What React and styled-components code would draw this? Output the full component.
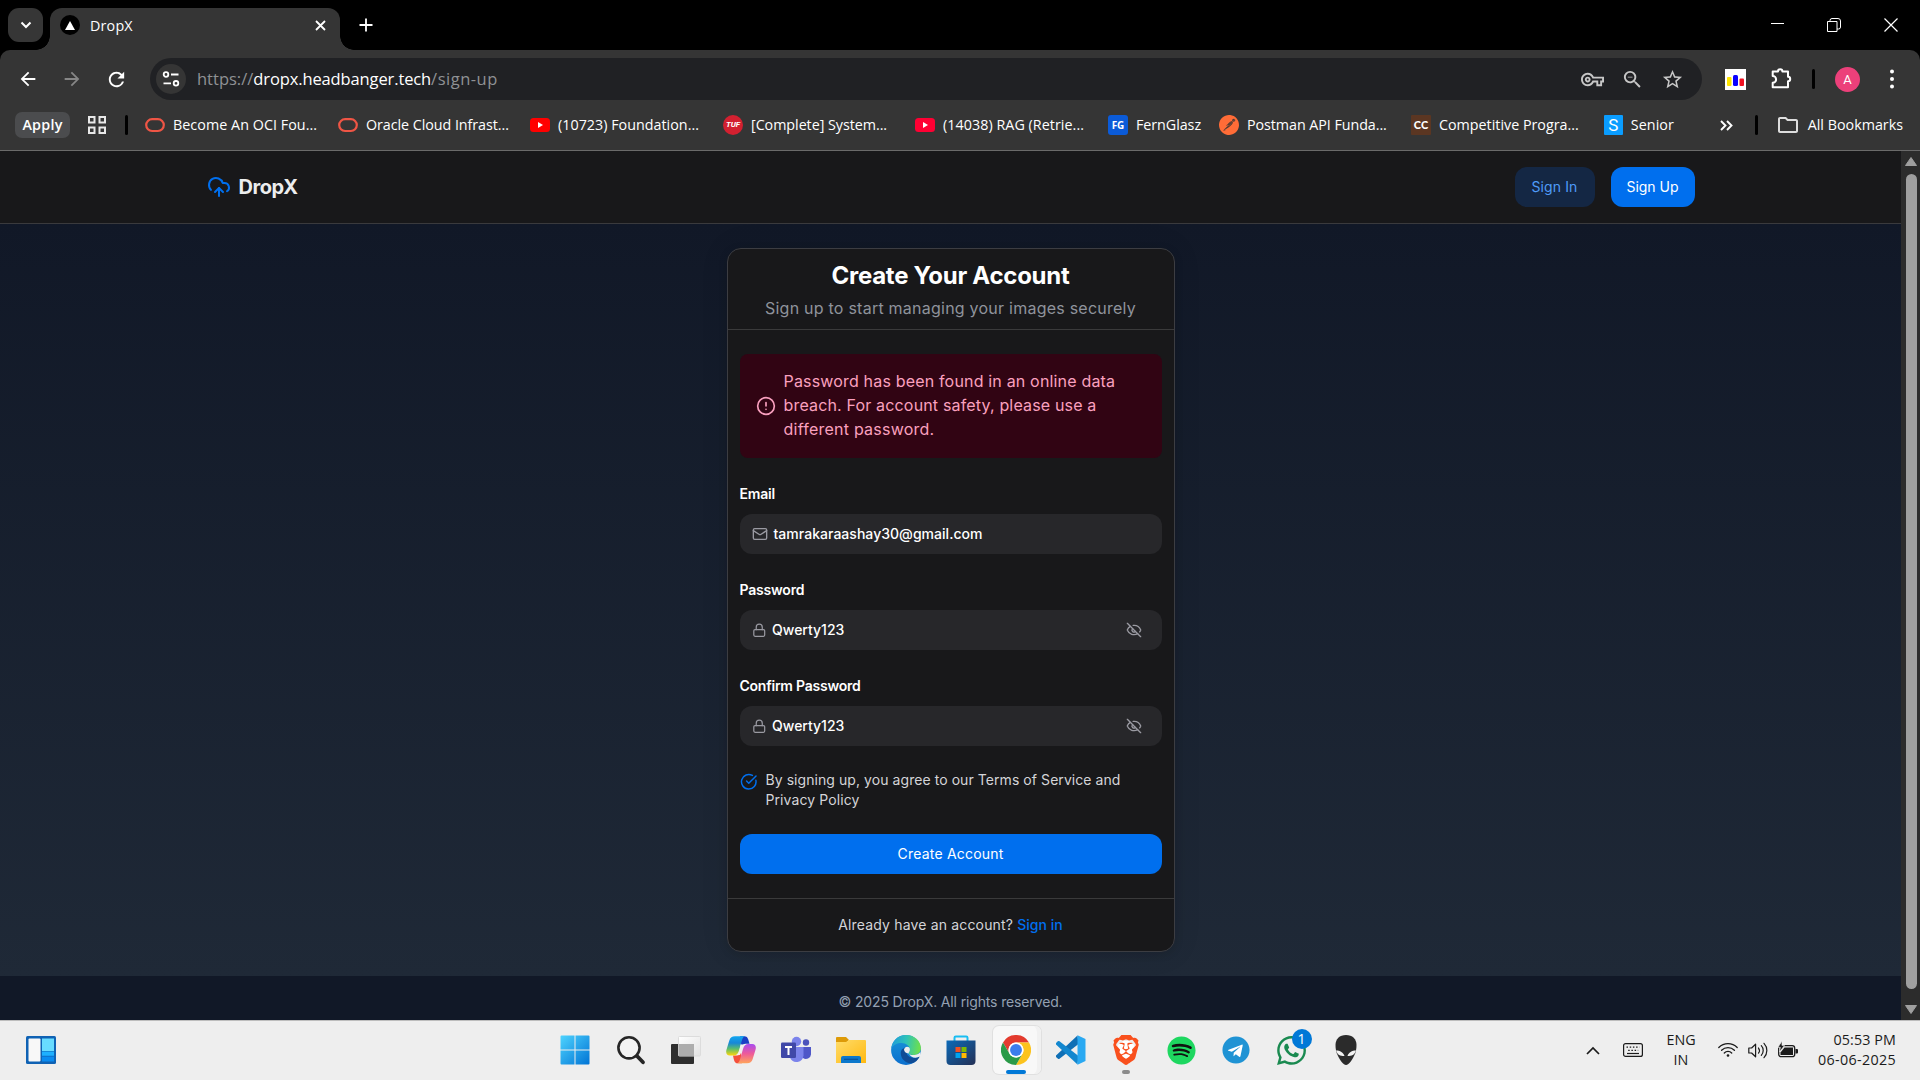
import React from "react";
import styled, { createGlobalStyle, css } from "styled-components";
import { CloudUpload, Mail, Lock, EyeOff, CircleCheckBig, CircleAlert } from "lucide-react";
import { MdArrowBack, MdArrowForward, MdRefresh, MdOutlineVpnKey, MdZoomOut, MdStarBorder, MdOutlineFolder } from "react-icons/md";
import { FaSpotify, FaTelegram, FaWhatsapp } from "react-icons/fa";
import { SiBrave, SiPostman } from "react-icons/si";

const Global = createGlobalStyle`
  *, *::before, *::after { box-sizing: border-box; }
  body { margin: 0; background: #000; overflow: hidden; }
  svg { display: block; flex: none; }
`;

const Screen = styled.div`
  width: 1920px;
  height: 1080px;
  display: flex;
  flex-direction: column;
  font-family: "Open Sans", "Noto Sans", sans-serif;
  overflow: hidden;
`;

const Txt = styled.span`
  white-space: nowrap;
  letter-spacing: ${(p) => p.$ls || 0}px;
`;

/* ---------- browser window ---------- */

const TabStrip = styled.div`
  height: 50px;
  background: #000;
  display: flex;
  padding: 8px 1px 0 8px;
  color: #fff;
`;
const TabSearch = styled.div`
  width: 35px;
  height: 34px;
  border-radius: 11px;
  background: #363636;
  display: grid;
  place-items: center;
`;
const Tab = styled.div`
  position: relative;
  width: 290px;
  margin-left: 7px;
  height: 42px;
  background: #353535;
  border-radius: 12px 12px 0 0;
  display: flex;
  align-items: center;
  padding: 0 13.5px 8px 10px;
  font-size: 14.3px;
  &::before, &::after {
    content: "";
    position: absolute;
    bottom: 0;
    width: 14px;
    height: 14px;
  }
  &::before { left: -14px; background: radial-gradient(circle at 0 0, transparent 13.5px, #353535 14px); }
  &::after { right: -14px; background: radial-gradient(circle at 100% 0, transparent 13.5px, #353535 14px); }
`;
const Favicon = styled.div`
  width: 20px;
  height: 20px;
  border-radius: 50%;
  background: #000;
  display: grid;
  place-items: center;
  margin-right: 10px;
`;
const Push = styled.div`
  flex: 1;
`;
const NewTab = styled.div`
  margin-left: 18.5px;
  width: 14px;
  height: 34px;
  display: grid;
  place-items: center;
`;
const WindowButton = styled.div`
  width: 57px;
  height: 33px;
  display: grid;
  place-items: center;
`;

const ChromeBars = styled.div`
  height: 101px;
  background: #353535;
  border-radius: 10px 10px 0 0;
  border-bottom: 1px solid #6a6a6a;
`;
const Toolbar = styled.div`
  height: 58px;
  padding-left: 5.5px;
  display: flex;
  align-items: center;
  color: #fff;
`;
const NavIcon = styled.div`
  width: 44.5px;
  display: grid;
  place-items: center;
  color: ${(p) => (p.$dim ? "#868686" : "#fff")};
`;
const Omnibox = styled.div`
  margin-left: 11px;
  width: 1552px;
  height: 42px;
  border-radius: 21px;
  background: #202124;
  display: flex;
  align-items: center;
  padding: 0 16.5px 0 6px;
  color: #c7c7c7;
`;
const SiteChip = styled.div`
  width: 30px;
  height: 30px;
  border-radius: 50%;
  background: #353535;
  display: grid;
  place-items: center;
  margin-right: 11px;
`;
const Url = styled.div`
  display: flex;
  font-size: 16.5px;
  line-height: 24px;
  color: #8f9194;
`;
const Host = styled(Txt)`
  color: #fff;
`;
const OmniIcon = styled.div`
  width: 40px;
  display: grid;
  place-items: center;
  &:last-child { width: 26px; margin-left: 7px; }
`;
const Bar = styled.div`
  width: 3px;
  height: 20px;
  border-radius: 1.5px;
  background: #000;
  margin-left: ${(p) => p.$ml}px;
`;
const ChartExt = styled.div`
  width: 21px;
  height: 21px;
  margin: 0 24px 0 23px;
`;
const Avatar = styled.div`
  width: 25px;
  height: 25px;
  border-radius: 50%;
  background: #ec407a;
  margin: 0 29px 0 20px;
  font: 13px/25px Roboto, sans-serif;
  text-align: center;
  color: #fff;
`;

const Bookmarks = styled.div`
  height: 34px;
  display: flex;
  align-items: center;
  padding: 0 17px 0 15px;
  font-size: 14.3px;
  line-height: 20px;
  color: #fff;
`;
const ApplyPill = styled.div`
  width: 55px;
  height: 26px;
  border-radius: 7px;
  background: #4b4c4e;
  font-weight: 600;
  text-align: center;
  line-height: 25px;
  margin-right: 18px;
`;
const BookmarkList = styled.div`
  display: flex;
  margin-left: 17px;
`;
const Bookmark = styled.div`
  width: ${(p) => p.$w}px;
  display: flex;
  align-items: center;
  gap: 8px;
`;
const AllBookmarks = styled.div`
  display: flex;
  align-items: center;
  gap: 8px;
  margin-left: 17.5px;
  svg { color: #ddd; }
`;
const Badge = styled.div`
  width: 20px;
  height: 20px;
  border-radius: ${(p) => p.$r}px;
  background: ${(p) => p.$bg};
  color: #fff;
  font: ${(p) => p.$font};
  line-height: 20px;
  text-align: center;
`;

/* ---------- web page ---------- */

const Viewport = styled.div`
  height: 869px;
  display: flex;
`;
const Page = styled.div`
  width: 1901px;
  display: flex;
  flex-direction: column;
  font-family: Inter, "Open Sans", sans-serif;
  font-size: 14px;
  line-height: 20px;
  color: #ecedee;
`;
const NavBar = styled.header`
  height: 73px;
  background: #18181a;
  border-bottom: 1px solid #3a3a3d;
`;
const NavInner = styled.div`
  width: 1536px;
  height: 72px;
  margin: 0 auto;
  padding: 0 24px;
  display: flex;
  align-items: center;
`;
const Brand = styled.div`
  display: flex;
  align-items: center;
  gap: 8px;
  flex: 1;
  font-size: 20px;
  font-weight: 700;
  svg { color: #006fee; }
`;
const Button = styled.div`
  height: 40px;
  width: ${(p) => p.$w || "100%"};
  border-radius: 12px;
  display: flex;
  align-items: center;
  justify-content: center;
  ${(p) =>
    p.$flat
      ? css`background: #142744; color: #4f9bf8; margin-right: 16px;`
      : css`background: #006fee; color: #fff;`}
`;
const Main = styled.main`
  flex: 1;
  display: flex;
  justify-content: center;
  align-items: flex-start;
  padding-top: 24px;
  background: linear-gradient(#111827, #1f2937);
`;
const Card = styled.section`
  width: 448px;
  height: 704px;
  border: 1px solid #3c3d42;
  border-radius: 14px;
  background: #18181a;
  box-shadow: 0 2px 10px rgba(0, 0, 0, 0.12), 0 0 30px rgba(0, 0, 0, 0.08);
`;
const CardHead = styled.div`
  height: 81px;
  padding-top: 11px;
  border-bottom: 1px solid #3a3a3b;
  display: flex;
  flex-direction: column;
  align-items: center;
  gap: 4px;
`;
const Title = styled.h1`
  margin: 0;
  font-size: 24px;
  line-height: 32px;
  font-weight: 700;
  color: #fff;
`;
const Subtitle = styled.p`
  margin: 0;
  font-size: 16px;
  line-height: 24px;
  color: #8f939c;
`;
const CardBody = styled.div`
  height: 569px;
  padding: 24px 12px;
  display: flex;
  flex-direction: column;
  gap: 24px;
  border-bottom: 1px solid #3a3a3b;
`;
const Lines = styled.div`
  display: flex;
  flex-direction: column;
`;
const AlertBox = styled.div`
  height: 104px;
  border-radius: 8px;
  background: #310413;
  color: #faa0bf;
  display: flex;
  align-items: center;
  gap: 8px;
  padding: 0 16px;
  font-size: 16px;
  line-height: 24px;
  ${Lines} { padding-bottom: 2px; }
`;
const Field = styled.div`
  display: flex;
  flex-direction: column;
  gap: 8px;
  height: 72px;
`;
const Label = styled.label`
  line-height: 24px;
  font-weight: 600;
  color: #fff;
`;
const Input = styled.div`
  height: 40px;
  border-radius: 12px;
  background: #27272a;
  display: flex;
  align-items: center;
  padding: 0 20px 0 12px;
  gap: 6px;
  color: #fff;
  font-weight: 500;
  svg { color: #9a9aa2; }
`;
const Terms = styled.div`
  height: 40px;
  display: flex;
  gap: 8px;
  padding-left: 0.5px;
  color: #d4d4d8;
  svg { color: #006fee; margin-top: 3px; }
`;
const CardFoot = styled.div`
  height: 52px;
  display: flex;
  align-items: center;
  justify-content: center;
  gap: 4px;
  color: #d4d4d8;
`;
const SignIn = styled(Txt)`
  color: #006fee;
  font-weight: 500;
`;
const PageFoot = styled.footer`
  height: 44px;
  background: #111827;
  color: #94a0b2;
  display: flex;
  align-items: center;
  justify-content: center;
  padding-top: 8px;
`;
const ScrollTrack = styled.div`
  width: 19px;
  background: #2c2c2c;
  display: flex;
  flex-direction: column;
  align-items: center;
  padding: 6px 0 6px 1px;
`;
const ScrollThumb = styled.div`
  width: 11px;
  height: 815px;
  margin: 8px 0 16px;
  border-radius: 6px;
  background: #9f9f9f;
`;

/* ---------- taskbar ---------- */

const TaskBar = styled.div`
  height: 60px;
  border-top: 1px solid #bdbdbd;
  padding-bottom: 1px;
  background: #eee;
  display: flex;
  align-items: center;
  color: #1b1b1b;
`;
const Widgets = styled.div`
  width: 548.5px;
  padding-left: 26px;
`;
const Apps = styled.div`
  display: flex;
  flex: 1;
`;
const AppSlot = styled.div`
  position: relative;
  width: 55px;
  height: 48px;
  padding-right: ${(p) => p.$pr || 0}px;
  display: grid;
  place-items: center;
`;
const ActivePlate = styled.div`
  position: absolute;
  inset: 0 3px 0 4px;
  border-radius: 6px;
  background: #f8f8f8;
  box-shadow: 0 0 0 1px #e0e0e0, inset -5px 0 0 -1px #f1f1f1;
`;
const Over = styled.div`
  position: relative;
`;
const Underline = styled.div`
  position: absolute;
  bottom: 0;
  left: 50%;
  width: ${(p) => p.$w}px;
  height: 4px;
  border-radius: 2px;
  transform: translateX(-50%);
  background: ${(p) => p.$c};
`;
const Count = styled.div`
  position: absolute;
  top: 3px;
  left: 28px;
  width: 20px;
  height: 20px;
  border-radius: 50%;
  background: #0078d7;
  color: #fff;
  font-size: 14px;
  line-height: 20px;
  text-align: center;
`;
const Disc = styled.div`
  width: 30px;
  height: 30px;
  display: grid;
  place-items: center;
  background: radial-gradient(circle, ${(p) => p.$c} 0 ${(p) => p.$s}px, transparent ${(p) => p.$s + 0.5}px);
`;
const Tray = styled.div`
  display: flex;
  align-items: center;
  padding-right: 24px;
  font-size: 14.3px;
  line-height: 20px;
`;
const TrayIcons = styled.div`
  display: flex;
  align-items: center;
  gap: ${(p) => p.$gap}px;
`;
const Lang = styled.div`
  width: 36px;
  margin: 0 19px 0 20px;
  padding-bottom: 1px;
  display: flex;
  flex-direction: column;
  align-items: center;
`;
const Clock = styled.div`
  width: 80px;
  margin-left: 18px;
  padding-bottom: 1px;
  display: flex;
  flex-direction: column;
  align-items: flex-end;
`;

/* ---------- drawings ---------- */

const Oracle = () => (
  <svg width="20" height="20" viewBox="0 0 20 20"><rect x="1.2" y="4.2" width="17.6" height="11.8" rx="5.9" fill="none" stroke="#ef5545" strokeWidth="2.2" /></svg>
);
const YouTube = ({ c }) => (
  <svg width="20" height="20" viewBox="0 0 20 20"><rect y="3" width="20" height="14" rx="3.5" fill={c} /><path d="M8 7l5 3-5 3z" fill="#fff" /></svg>
);
const Postman = styled.div`
  width: 20px;
  height: 20px;
  border-radius: 50%;
  background: radial-gradient(circle, #4a3a33 8px, transparent 9px);
  svg { color: #ff6c37; }
`;
const Tune = () => (
  <svg width="18" height="18" viewBox="0 0 18 18" fill="none" stroke="#fff" strokeWidth="1.8"><circle cx="4" cy="4.5" r="2.3" /><path d="M9 4.5h7.5M1.5 13.3H9" /><circle cx="14" cy="13.3" r="2.3" /></svg>
);
const Puzzle = () => (
  <svg width="22" height="22" viewBox="0 0 22 22" fill="none" stroke="#fff" strokeWidth="2" strokeLinejoin="round"><path d="M2.700 3.400H8a2.200 2.200 0 014.400 0H18v5.400a2.200 2.200 0 010 4.400v6H2.700v-4.400a3.400 3.400 0 000-6.800z" /></svg>
);
const Chart = () => (
  <svg width="21" height="21" viewBox="0 0 21 21"><path fill="#fff" d="M0 0h21v21H0z" /><rect x="2" y="8" width="4.5" height="9" rx="1" fill="#ffe600" /><rect x="8" y="6" width="5" height="11" rx="1.5" fill="#0a00ff" /><rect x="14.5" y="9.5" width="4.500" height="7.500" rx="1" fill="#f01020" /></svg>
);
const WidgetIcon = () => (
  <svg width="30" height="28" viewBox="0 0 30 28"><rect width="30" height="28" rx="1.5" fill="#0f62b4" /><rect x="2.5" y="2.5" width="12" height="23" rx="1" fill="#f8f8f8" /><path fill="#68dcff" d="M16 2.500h12V15H16z" /><path fill="#1eb0ff" d="M16 15.500h12v4.300H16z" /><path fill="#0a8bf0" d="M16 20.500h12v5H16z" /></svg>
);
const Windows = () => (
  <svg width="30" height="30" viewBox="0 0 30 30"><defs><linearGradient id="win" x1="0" y1="0" x2="30" y2="30" gradientUnits="userSpaceOnUse"><stop stopColor="#4fd5ff" /><stop offset="1" stopColor="#0072d4" /></linearGradient></defs><path fill="url(#win)" d="M.5 1.500a1 1 0 011-1H14.500v14H.5zM15.500.5h13a1 1 0 011 1v13H15.500zM.5 15.500h14v14h-13a1 1 0 01-1-1zM15.500 15.500h14v13a1 1 0 01-1 1H15.500z" /></svg>
);
const Search = () => (
  <svg width="30" height="30" viewBox="0 0 30 30" fill="none" stroke="#262626" strokeLinecap="round"><circle cx="13" cy="12.800" r="10.600" strokeWidth="2.600" fill="#f3f3f3" /><path d="M21 21l6 6.300" strokeWidth="3.800" /></svg>
);
const TaskView = () => (
  <svg width="30" height="30" viewBox="0 0 30 30"><defs><linearGradient id="tv" x1="0" y1="0" x2="1" y2="1"><stop stopColor="#fff" /><stop offset="1" stopColor="#e2e2e2" /></linearGradient></defs><rect x="0" y="9" width="23" height="20" rx="1" fill="#2e2e2e" /><rect x="7.500" y="1.500" width="22" height="19.500" rx="1" fill="url(#tv)" stroke="#dcdcdc" /><path d="M7.500 9H23v12H7.500z" fill="#adadad" /></svg>
);
const Copilot = () => (
  <svg width="30" height="28" viewBox="0 0 30 28">
    <defs>
      <linearGradient id="cpa" x1="0" y1="0" x2="0" y2="1"><stop stopColor="#12a7f0" /><stop offset=".35" stopColor="#1787d8" /><stop offset=".65" stopColor="#5bbd6e" /><stop offset="1" stopColor="#ffd60a" /></linearGradient>
      <linearGradient id="cpb" x1="0" y1="0" x2="0" y2="1"><stop stopColor="#a84cf0" /><stop offset=".5" stopColor="#ee5a9a" /><stop offset="1" stopColor="#ffa55a" /></linearGradient>
    </defs>
    <path d="M14 .3h4.500c3 0 3.800 2.700 5 7.500h-4c-2 0-3 1-4 3z" fill="#1a3fc4" />
    <path d="M16 27.300h-4.500c-3 0-3.600-3-4.500-7.800h4c2 0 3-1 4-3z" fill="#f4503c" />
    <path d="M9 .3h10.500c-2 0-3 2-3.700 4.500L13 14.500c-1 3.500-2.500 5-5.500 5H3.800C.8 19.500-.4 17 .4 14L3.300 4.500C4.200 1.600 6 .3 9 .3z" fill="url(#cpa)" />
    <path d="M21 27.300H10.500c2 0 3-2 3.700-4.500L17 13c1-3.500 2.500-5 5.500-5h3.700c3 0 4.200 2.500 3.400 5.500l-2.900 9.600c-.9 2.900-2.700 4.200-5.700 4.200z" fill="url(#cpb)" />
    <path d="M14.800 8.500h3.200c-1 .8-1.800 2.500-2.300 4.500l-1.300 5c-.2.700-.5 1-1.200 1h-2.400c1.200-.8 2-2.200 2.500-4z" fill="#f4f0ee" />
  </svg>
);
const Teams = () => (
  <svg width="30" height="28" viewBox="0 0 30 28"><circle cx="25" cy="6.500" r="3.200" fill="#4b53bc" /><path d="M22 11h8v7.500a5 5 0 01-8 3.500z" fill="#4f57c8" /><circle cx="15.500" cy="5.500" r="4.700" fill="#7b83eb" /><path d="M9 11h13.500v8.500a7 7 0 01-13.500 2z" fill="#7b83eb" /><rect y="6.500" width="15" height="15.500" rx="1.200" fill="#4048a8" /><path d="M4 10h7v1.900H8.500V19h-2v-7.100H4z" fill="#fff" /></svg>
);
const Explorer = () => (
  <svg width="30" height="28" viewBox="0 0 30 28"><defs><linearGradient id="fx" x1="0" y1="0" x2="1" y2="1"><stop stopColor="#ffdc6a" /><stop offset="1" stopColor="#ffb910" /></linearGradient></defs><path d="M0 2a1 1 0 011-1h9l3 3-3 3H0z" fill="#dd9a08" /><path d="M0 6h10l3-2h16a1 1 0 011 1v22H0z" fill="url(#fx)" /><path d="M5 27v-5a2 2 0 012-2h16a2 2 0 012 2v5z" fill="#0c78cc" /><path d="M8 23.300h14" stroke="#07529a" strokeWidth="1.200" /></svg>
);
const Edge = () => (
  <svg width="30" height="30" viewBox="0 0 30 30">
    <defs>
      <linearGradient id="eg1" x1="0" y1=".3" x2="1" y2=".4"><stop stopColor="#1f9bdb" /><stop offset=".5" stopColor="#2fc3b8" /><stop offset="1" stopColor="#6fe04a" /></linearGradient>
      <linearGradient id="eg2" x1="0" y1="0" x2="0" y2="1"><stop stopColor="#1b96d8" /><stop offset="1" stopColor="#0b6fce" /></linearGradient>
    </defs>
    <circle cx="15" cy="15" r="14.900" fill="url(#eg2)" />
    <path d="M9.800 19c.5 6 6 9.500 11 9.300 3-.5 6-3 8-6.800-4 2.500-12 2-13.500-4-.5-2 .5-3.500 1-4.500-3-1-7 1-6.500 6z" fill="#0f4c96" />
    <path d="M.3 13.500C1.500 5 7.500.1 15 .1c9 0 14.900 6.500 14.900 12.800 0 4.600-3.500 7.100-7.500 7.100-3 0-4.700-1-4.700-2 0-.8 1.200-1.300 1.200-3.300C18.900 11 15 8 10.500 8 6 8 2 10 .3 13.500z" fill="url(#eg1)" />
    <path d="M18 18.500c-1.500-.1-4.700-.8-5-4 .6-2.500 3-3.600 5-2.200 1 1 1 2 .8 3.400-.1.800-1.100 1.500-1.100 2.300 0 1.400 3 2.500 6 1.900 2.700-.5 4.500-1.500 5.600-3 .5 1.500.5 3.400-.3 4.700-4.500 2.100-9.800 1-11-3.100z" fill="#eee" />
  </svg>
);
const Store = () => (
  <svg width="30" height="30" viewBox="0 0 30 30"><defs><linearGradient id="st" x1="0" y1="0" x2="1" y2="1"><stop stopColor="#0c6ab8" /><stop offset="1" stopColor="#243055" /></linearGradient></defs><path d="M8.500 6V2.800a1.300 1.300 0 011.300-1.300h10.400a1.300 1.300 0 011.300 1.300V6" fill="none" stroke="#18bdf2" strokeWidth="2" /><path d="M.5 5.500h29V26a4 4 0 01-4 4h-21a4 4 0 01-4-4z" fill="url(#st)" /><path d="M9.500 12h5v5h-5z" fill="#f25022" /><path d="M15.500 12h5v5h-5z" fill="#7fba00" /><path d="M9.500 18h5v5h-5z" fill="#00a4ef" /><path d="M15.500 18h5v5h-5z" fill="#ffb900" /></svg>
);
const ChromeLogo = () => (
  <svg width="30" height="30" viewBox="0 0 48 48"><path d="M3.200 12A24 24 0 0144.800 12H24A12 12 0 0013.600 30z" fill="#e33b2e" /><path d="M44.800 12A24 24 0 0124 48l10.400-18A12 12 0 0024 12z" fill="#fcc31e" /><path d="M24 48A24 24 0 013.200 12l10.400 18a12 12 0 0020.800 0z" fill="#2a9a48" /><circle cx="24" cy="24" r="12" fill="#fff" /><circle cx="24" cy="24" r="9.500" fill="#3b7ded" /></svg>
);
const VsCode = () => (
  <svg width="30" height="30" viewBox="0 0 30 30"><path d="M21.500.5L0 20.500c-.5.500-.5 1 0 1.500l2 1.700c.5.400 1 .4 1.500.1L22.500 9z" fill="#0f6fb5" /><path d="M21.500 29.500L0 9.500c-.5-.5-.5-1 0-1.500l2-1.700c.5-.4 1-.4 1.500-.1L22.500 21z" fill="#1287cf" /><path d="M21.500.3L29.500 4v22l-8 3.700z" fill="#2aa9f2" /></svg>
);
const Alien = () => (
  <svg width="22" height="30" viewBox="0 0 22 30"><path d="M11 0C17.500 0 21.500 4 21.500 10c0 4-.5 7-2.500 11-1.500 3-5 9-8 9s-6.500-6-8-9C1 17 .5 14 .5 10 .5 4 4.500 0 11 0z" fill="#2b2b2b" /><path d="M1 15.500c4 0 7.500 2 8.500 5.500C5 21 2.500 20 1 15.500zM21 15.500c-4 0-7.500 2-8.500 5.500C17 21 19.500 20 21 15.500z" fill="#f2f2f2" /></svg>
);
const Keyboard = () => (
  <svg width="20" height="14" viewBox="0 0 20 14" fill="none" stroke="#1b1b1b"><rect x=".6" y=".6" width="18.800" height="12.800" rx="2" strokeWidth="1.200" /><path d="M3.500 4.200h13" strokeWidth="1.300" strokeDasharray="1.500 1.700" /><path d="M5.200 7.300h10" strokeWidth="1.300" strokeDasharray="1.500 1.700" /><path d="M4 10.500h12" strokeWidth="1.200" /></svg>
);
const Wifi = () => (
  <svg width="20" height="16" viewBox="0 0 20 16" fill="none" stroke="#1b1b1b" strokeWidth="1.300" strokeLinecap="round"><path d="M.8 5.500a13 13 0 0118.400 0M3.600 8.300a9 9 0 0112.800 0M6.300 11a5.200 5.200 0 017.400 0" /><circle cx="10" cy="13.500" r="1.300" fill="#1b1b1b" stroke="none" /></svg>
);
const Speaker = () => (
  <svg width="20" height="17" viewBox="0 0 20 17" fill="none" stroke="#1b1b1b" strokeWidth="1.200" strokeLinecap="round" strokeLinejoin="round"><path d="M.8 6v5h2.800l4 3.800V2.200l-4 3.800zM10.500 6a4 4 0 010 5M13.300 3.700a7 7 0 010 9.600M16 1.300a10.500 10.500 0 010 14.400" /></svg>
);
const Battery = () => (
  <svg width="20" height="19" viewBox="0 0 20 19"><rect x=".7" y="4.700" width="16" height="11" rx="2.500" fill="none" stroke="#1b1b1b" strokeWidth="1.300" /><path d="M6.500 6.500H15V14H2.500v-2.500z" fill="#1b1b1b" /><path d="M17.500 8h1.500a1 1 0 011 1v2.500a1 1 0 01-1 1h-1.500z" fill="#1b1b1b" /><path d="M4 0L0 6.300h2.300L1.500 11 6.500 4.500H4z" fill="#1b1b1b" stroke="#eee" strokeWidth=".7" /></svg>
);

const marks = [
  { w: 193, t: "Become An OCI Fou...", ls: 0.05, icon: <Oracle /> },
  { w: 192, t: "Oracle Cloud Infrast...", ls: -0.05, icon: <Oracle /> },
  { w: 193, t: "(10723) Foundation...", ls: 0.02, icon: <YouTube c="#f00" /> },
  { w: 192, t: "[Complete] System...", ls: -0.04, icon: <Badge $r={10} $bg="#d32030" $font="italic 700 8px Roboto, sans-serif">TUF</Badge> },
  { w: 193, t: "(14038) RAG (Retrie...", ls: 0.05, icon: <YouTube c="#ff0033" /> },
  { w: 111, t: "FernGlasz", ls: -0.05, icon: <Badge $r={3} $bg="#0b5bd8" $font='700 10px "Open Sans", sans-serif'>FG</Badge> },
  { w: 192, t: "Postman API Funda...", ls: -0.06, icon: <Postman><SiPostman size={20} /></Postman> },
  { w: 193, t: "Competitive Progra...", ls: 0, icon: <Badge $r={1} $bg="#5b3622" $font="900 11px Lato, sans-serif">CC</Badge> },
  { w: 70, t: "Senior", ls: 0.1, icon: <Badge $r={1} $bg="#0a9dff" $font="17px Roboto, sans-serif">S</Badge> },
];

export default function App() {
  return (
    <Screen>
      <Global />
      <TabStrip>
        <TabSearch><svg width="12" height="8" viewBox="0 0 12 8" fill="none" stroke="#fff" strokeWidth="2"><path d="M1.500 1.500L6 6l4.500-4.500" /></svg></TabSearch>
        <Tab>
          <Favicon><svg width="10" height="9" viewBox="0 0 10 9"><path d="M5 0l5 9H0z" fill="#fff" /></svg></Favicon>
          <Txt $ls={0.2}>DropX</Txt>
          <Push />
          <svg width="13" height="13" viewBox="0 0 13 13" stroke="#fff" strokeWidth="1.8"><path d="M2 2l9 9M11 2l-9 9" /></svg>
        </Tab>
        <NewTab><svg width="14" height="14" viewBox="0 0 14 14" stroke="#fff" strokeWidth="1.8"><path d="M7 .5v13M.5 7h13" /></svg></NewTab>
        <Push />
        <WindowButton><svg width="15" height="13" viewBox="0 0 15 13"><path d="M2 5.500h13" stroke="#fff" /></svg></WindowButton>
        <WindowButton><svg width="14" height="14" viewBox="0 0 14 14" fill="none" stroke="#fff"><path d="M.5 3.500h9.500v10H.5zM3 3.500v-1a2 2 0 012-2h6a2.500 2.500 0 012.500 2.500v6a2 2 0 01-2 2H10" /></svg></WindowButton>
        <WindowButton><svg width="14" height="14" viewBox="0 0 14 14" stroke="#fff" strokeWidth="1.2"><path d="M.5.5l13 13M13.500.5l-13 13" /></svg></WindowButton>
      </TabStrip>

      <ChromeBars>
        <Toolbar>
          <NavIcon><MdArrowBack size={22} /></NavIcon>
          <NavIcon $dim><MdArrowForward size={22} /></NavIcon>
          <NavIcon><MdRefresh size={23} /></NavIcon>
          <Omnibox>
            <SiteChip><Tune /></SiteChip>
            <Url>
              <Txt>https://</Txt>
              <Host $ls={-0.12}>dropx.headbanger.tech</Host>
              <Txt $ls={0.5}>/sign-up</Txt>
            </Url>
            <Push />
            <OmniIcon><MdOutlineVpnKey size={23} /></OmniIcon>
            <OmniIcon><MdZoomOut size={23} /></OmniIcon>
            <OmniIcon><MdStarBorder size={23} /></OmniIcon>
          </Omnibox>
          <ChartExt><Chart /></ChartExt>
          <Puzzle />
          <Bar $ml={20} />
          <Avatar>A</Avatar>
          <svg width="6" height="22" viewBox="0 0 6 22" fill="#fff"><circle cx="3" cy="3.500" r="2" /><circle cx="3" cy="11" r="2" /><circle cx="3" cy="18.500" r="2" /></svg>
        </Toolbar>
        <Bookmarks>
          <ApplyPill><Txt $ls={0.25}>Apply</Txt></ApplyPill>
          <svg width="18" height="18" viewBox="0 0 18 18" fill="none" stroke="#e8e8e8" strokeWidth="2"><path d="M1 1h5.500v5.500H1zM11.500 1H17v5.500h-5.500zM1 11.500h5.500V17H1zM11.500 11.500H17V17h-5.500z" /></svg>
          <Bar $ml={19} />
          <BookmarkList>
            {marks.map((m) => (
              <Bookmark key={m.t} $w={m.w}>{m.icon}<Txt $ls={m.ls}>{m.t}</Txt></Bookmark>
            ))}
          </BookmarkList>
          <Push />
          <svg width="13" height="11" viewBox="0 0 13 11" fill="none" stroke="#fff" strokeWidth="1.9"><path d="M1 1l4.500 4.500L1 10M7 1l4.500 4.500L7 10" /></svg>
          <Bar $ml={22} />
          <AllBookmarks>
            <MdOutlineFolder size={24} />
            <Txt>All Bookmarks</Txt>
          </AllBookmarks>
        </Bookmarks>
      </ChromeBars>

      <Viewport>
        <Page>
          <NavBar>
            <NavInner>
              <Brand><CloudUpload size={24} /><Txt $ls={-0.43}>DropX</Txt></Brand>
              <Button $flat $w="80px"><Txt $ls={0.11}>Sign In</Txt></Button>
              <Button $w="84px"><Txt>Sign Up</Txt></Button>
            </NavInner>
          </NavBar>
          <Main>
            <Card>
              <CardHead>
                <Title><Txt $ls={-0.26}>Create Your Account</Txt></Title>
                <Subtitle><Txt $ls={0.237}>Sign up to start managing your images securely</Txt></Subtitle>
              </CardHead>
              <CardBody>
                <AlertBox>
                  <CircleAlert size={20} />
                  <Lines>
                    <div><Txt $ls={0.175}>Password has been found in an online data</Txt></div>
                    <div><Txt $ls={0.163}>breach. For account safety, please use a</Txt></div>
                    <div><Txt $ls={0.24}>different password.</Txt></div>
                  </Lines>
                </AlertBox>
                <Field>
                  <Label><Txt $ls={-0.19}>Email</Txt></Label>
                  <Input><Mail size={16} /><Txt $ls={0.03}>tamrakaraashay30@gmail.com</Txt></Input>
                </Field>
                <Field>
                  <Label><Txt $ls={-0.2}>Password</Txt></Label>
                  <Input><Lock size={14.5} /><Txt>Qwerty123</Txt><Push /><EyeOff size={16} /></Input>
                </Field>
                <Field>
                  <Label><Txt $ls={-0.237}>Confirm Password</Txt></Label>
                  <Input><Lock size={14.5} /><Txt>Qwerty123</Txt><Push /><EyeOff size={16} /></Input>
                </Field>
                <Terms>
                  <CircleCheckBig size={17.5} />
                  <Lines>
                    <div><Txt $ls={0.065}>By signing up, you agree to our Terms of Service and</Txt></div>
                    <div><Txt $ls={0.096}>Privacy Policy</Txt></div>
                  </Lines>
                </Terms>
                <Button><Txt $ls={0.2}>Create Account</Txt></Button>
              </CardBody>
              <CardFoot>
                <Txt $ls={0.169}>Already have an account?</Txt>
                <SignIn $ls={0.05}>Sign in</SignIn>
              </CardFoot>
            </Card>
          </Main>
          <PageFoot><Txt $ls={-0.142}>© 2025 DropX. All rights reserved.</Txt></PageFoot>
        </Page>
        <ScrollTrack>
          <svg width="12" height="9" viewBox="0 0 12 9"><path d="M6 .5L11.500 8.500H.5z" fill="#9f9f9f" stroke="#9f9f9f" strokeLinejoin="round" /></svg>
          <ScrollThumb />
          <svg width="12" height="9" viewBox="0 0 12 9"><path d="M6 8.500L.5.500h11z" fill="#9f9f9f" stroke="#9f9f9f" strokeLinejoin="round" /></svg>
        </ScrollTrack>
      </Viewport>

      <TaskBar>
        <Widgets><WidgetIcon /></Widgets>
        <Apps>
          <AppSlot $pr={3}><Windows /></AppSlot>
          <AppSlot><Search /></AppSlot>
          <AppSlot><TaskView /></AppSlot>
          <AppSlot><Copilot /></AppSlot>
          <AppSlot><Teams /></AppSlot>
          <AppSlot><Explorer /></AppSlot>
          <AppSlot><Edge /></AppSlot>
          <AppSlot $pr={1}><Store /></AppSlot>
          <AppSlot><ActivePlate /><Over><ChromeLogo /></Over><Underline $w={20} $c="#0078d7" /></AppSlot>
          <AppSlot><VsCode /></AppSlot>
          <AppSlot><Disc $c="#fff" $s={9}><SiBrave size={30} color="#f9501d" /></Disc><Underline $w={8} $c="#8c8c8c" /></AppSlot>
          <AppSlot><Disc $c="#111" $s={12}><FaSpotify size={29} color="#1ed760" /></Disc></AppSlot>
          <AppSlot><Disc $c="#fff" $s={11}><FaTelegram size={28} color="#1f93d4" /></Disc></AppSlot>
          <AppSlot><FaWhatsapp size={33} color="#1a8a50" /><Count>1</Count></AppSlot>
          <AppSlot><Alien /></AppSlot>
        </Apps>
        <Tray>
          <TrayIcons $gap={23}>
            <svg width="14" height="9" viewBox="0 0 14 9" fill="none" stroke="#1b1b1b" strokeWidth="1.7"><path d="M1 8l6-6 6 6" /></svg>
            <Keyboard />
          </TrayIcons>
          <Lang><Txt>ENG</Txt><Txt>IN</Txt></Lang>
          <TrayIcons $gap={10}><Wifi /><Speaker /><Battery /></TrayIcons>
          <Clock><Txt $ls={0.1}>05:53 PM</Txt><Txt $ls={0.33}>06-06-2025</Txt></Clock>
        </Tray>
      </TaskBar>
    </Screen>
  );
}
